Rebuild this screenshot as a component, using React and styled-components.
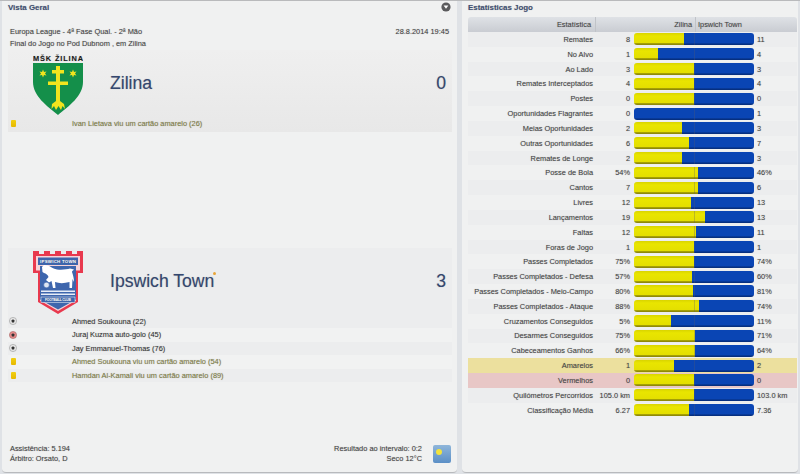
import React from 'react'
import styled, { createGlobalStyle } from 'styled-components'

const GlobalStyle = createGlobalStyle`
  html, body {
    margin: 0;
    padding: 0;
    background: #dfe2e6;
  }
  * {
    box-sizing: border-box;
  }
`

const stats = [
  ['Remates', '8', '11', 42],
  ['No Alvo', '1', '4', 20],
  ['Ao Lado', '3', '3', 50],
  ['Remates Interceptados', '4', '4', 50],
  ['Postes', '0', '0', 50],
  ['Oportunidades Flagrantes', '0', '1', 0],
  ['Meias Oportunidades', '2', '3', 40],
  ['Outras Oportunidades', '6', '7', 46],
  ['Remates de Longe', '2', '3', 40],
  ['Posse de Bola', '54%', '46%', 53.5],
  ['Cantos', '7', '6', 53.5],
  ['Livres', '12', '13', 47.5],
  ['Lançamentos', '19', '13', 59],
  ['Faltas', '12', '11', 51.7],
  ['Foras de Jogo', '1', '1', 50],
  ['Passes Completados', '75%', '74%', 50],
  ['Passes Completados - Defesa', '57%', '60%', 48],
  ['Passes Completados - Meio-Campo', '80%', '81%', 49],
  ['Passes Completados - Ataque', '88%', '74%', 54],
  ['Cruzamentos Conseguidos', '5%', '11%', 31],
  ['Desarmes Conseguidos', '75%', '71%', 51],
  ['Cabeceamentos Ganhos', '66%', '64%', 51],
  ['Amarelos', '1', '2', 33.3, 'yellow'],
  ['Vermelhos', '0', '0', 50, 'red'],
  ['Quilómetros Percorridos', '105.0 km', '103.0 km', 50],
  ['Classificação Média', '6.27', '7.36', 46],
]

const homeEvents = [{ kind: 'card', text: 'Ivan Lietava viu um cartão amarelo (26)' }]

const awayEvents = [
  { kind: 'goal', text: 'Ahmed Soukouna (22)' },
  { kind: 'own', text: 'Juraj Kuzma auto-golo (45)' },
  { kind: 'goal', text: 'Jay Emmanuel-Thomas (76)' },
  { kind: 'card', text: 'Ahmed Soukouna viu um cartão amarelo (54)' },
  { kind: 'card', text: 'Hamdan Al-Kamali viu um cartão amarelo (89)' },
]

const ZilinaBadge = () => (
  <svg width='50' height='62' viewBox='0 0 50 62'>
    <text x='25' y='7' textAnchor='middle' fontFamily='Liberation Sans, sans-serif' fontWeight='700' fontSize='7.4' fill='#1a1a1a' textLength='50'>
      MŠK ŽILINA
    </text>
    <path d='M0 9 H50 V28 C50 42 36 52 25 61 C14 52 0 42 0 28 Z' fill='#148f4a' />
    <g fill='#f2e41e'>
      <path d='M23 12 H27 V16 H31 V19.5 H27 V27.5 H35 V31 H27 V48 H23 V31 H15 V27.5 H23 V19.5 H19 V16 H23 Z' />
      <path d='M23 47 H27 L31 50 L32 55 L29.5 52 L28 56 L25.5 52 L23 56 L21 52 L18.5 55 L19 50 Z' />
      <path d='M10 15.5 L11 18 L13.5 17.4 L12 19.5 L13.5 21.6 L11 21 L10 23.5 L9 21 L6.5 21.6 L8 19.5 L6.5 17.4 L9 18 Z' />
      <path d='M40 15.5 L41 18 L43.5 17.4 L42 19.5 L43.5 21.6 L41 21 L40 23.5 L39 21 L36.5 21.6 L38 19.5 L36.5 17.4 L39 18 Z' />
    </g>
  </svg>
)

const IpswichBadge = () => (
  <svg width='50' height='63' viewBox='0 0 50 63'>
    <path d='M0 0 H6 V3 H11 V0 H17 V3 H22 V0 H28 V3 H33 V0 H39 V3 H44 V0 H50 V22 H45 V51 L25 63 L5 51 V22 H0 Z' fill='#e8394e' />
    <path d='M3 5 H47 V19.5 H43 V49.5 L25 60 L7 49.5 V19.5 H3 Z' fill='#f6d3d8' />
    <path d='M5 6.5 H45 V14 H43 V48.5 L25 58.5 L7 48.5 V14 H5 Z' fill='#3e66ad' />
    <text x='25' y='12' textAnchor='middle' fontFamily='Liberation Sans, sans-serif' fontWeight='700' fontSize='4.4' fill='#fff' textLength='36'>
      IPSWICH TOWN
    </text>
    <rect x='7' y='14' width='36' height='1' fill='#f6d3d8' />
    <path d='M9 16 L11 14 L15 14.5 C18 15.5 20 18 24 18.5 C29 19 34 18.5 37 17.5 L41 18.5 C40 19.5 39 20 39 21 C40 24 41 27 41 31 L39.5 28 L39 37 L36.5 37 L36.5 31 C31 32.5 26 32.5 22 31 L22.5 37 L20 37 L18.5 30 L16 31.5 L13 29 L15.5 26 C15 24 13 22.5 11 22 L9.5 21 Z' fill='#fff' />
    <circle cx='13.5' cy='34' r='2.8' fill='#dfe6f2' stroke='#3e66ad' strokeWidth='0.5' />
    <path d='M8 39.5 H42 V41 H8 Z M8 42.5 H42 V44 H8 Z' fill='#e8eef8' />
    <rect x='8' y='46' width='34' height='5.5' fill='#3e66ad' stroke='#fff' strokeWidth='0.5' />
    <text x='25' y='50' textAnchor='middle' fontFamily='Liberation Sans, sans-serif' fontWeight='700' fontSize='3.4' fill='#fff' textLength='26'>
      FOOTBALL CLUB
    </text>
  </svg>
)

const BallIcon = ({ own }) => (
  <svg width='8' height='8' viewBox='0 0 8 8'>
    <circle cx='4' cy='4' r='3.6' fill={own ? '#e58a8a' : '#e6e6e6'} stroke={own ? '#9a5a5a' : '#8a8a8a'} strokeWidth='0.5' />
    <path d='M4 2.3 L5.7 3.5 L5 5.4 H3 L2.3 3.5 Z' fill='#333' />
  </svg>
)

const EventList = ({ events, striped }) => (
  <div>
    {events.map((ev) => (
      <EventRow key={ev.text} $striped={striped}>
        <IconCell>
          {ev.kind === 'card' ? <CardIcon /> : <BallIcon own={ev.kind === 'own'} />}
        </IconCell>
        <EventText $card={ev.kind === 'card'}>{ev.text}</EventText>
      </EventRow>
    ))}
  </div>
)

const StatBar = ({ pct }) => (
  <Bar>
    <BarHome style={{ width: `${pct}%` }} />
    <BarAway />
    <BarMid />
  </Bar>
)

const App = () => {
  return (
    <Page>
      <GlobalStyle />
      <LeftPanel>
        <PanelHead>
          <PanelTitle>Vista Geral</PanelTitle>
          <MenuButton>
            <svg width='10' height='10' viewBox='0 0 10 10'>
              <circle cx='5' cy='5' r='4.6' fill='#5a5a5c' />
              <path d='M2.6 3.6 H7.4 L5 6.8 Z' fill='#fff' />
            </svg>
          </MenuButton>
        </PanelHead>
        <MatchInfo>
          <InfoLine>
            <span>Europa League - 4ª Fase Qual. - 2ª Mão</span>
            <span>28.8.2014 19:45</span>
          </InfoLine>
          <InfoLine>
            <span>Final do Jogo no Pod Dubnom , em Zilina</span>
          </InfoLine>
        </MatchInfo>
        <TeamBlock>
          <TeamTop>
            <BadgeCell>
              <ZilinaBadge />
            </BadgeCell>
            <TeamName>Zilina</TeamName>
            <Score>0</Score>
          </TeamTop>
          <EventList events={homeEvents} />
        </TeamBlock>
        <AwayGap />
        <TeamBlock $away>
          <TeamTop>
            <BadgeCell $away>
              <IpswichBadge />
            </BadgeCell>
            <TeamName>
              Ipswich Town<Star />
            </TeamName>
            <Score>3</Score>
          </TeamTop>
          <EventList events={awayEvents} striped />
        </TeamBlock>
        <Footer>
          <div>
            <div>Assistência: 5.194</div>
            <div>Árbitro: Orsato, D</div>
          </div>
          <FooterRight>
            <RightText>
              <div>Resultado ao intervalo: 0:2</div>
              <div>Seco 12°C</div>
            </RightText>
            <Weather>
              <Sun />
            </Weather>
          </FooterRight>
        </Footer>
      </LeftPanel>
      <RightPanel>
        <PanelHead>
          <PanelTitle>Estatísticas Jogo</PanelTitle>
        </PanelHead>
        <Table>
          <TableHead>
            <HeadLabel>Estatística</HeadLabel>
            <HeadHome>Zilina</HeadHome>
            <HeadAway>Ipswich Town</HeadAway>
          </TableHead>
          {stats.map(([label, home, away, pct, tone], i) => (
            <StatRow key={label} $odd={i % 2 === 0} $tone={tone}>
              <StatLabel>{label}</StatLabel>
              <HomeValue>{home}</HomeValue>
              <StatBar pct={pct} />
              <AwayValue>{away}</AwayValue>
            </StatRow>
          ))}
        </Table>
      </RightPanel>
    </Page>
  )
}

export default App

const Page = styled.div`
  width: 800px;
  height: 474px;
  display: flex;
  gap: 5px;
  padding: 0 2px 1px;
  border-top: 1px solid #b9babc;
  overflow: hidden;
  font-family: 'Liberation Sans', Arial, sans-serif;
  font-size: 7.4px;
  color: #444;
  text-shadow: 0 0 1px rgba(60, 60, 60, 0.35);
`

const Panel = styled.section`
  height: 100%;
  background: #f0f1f1;
  border-bottom: 1px solid #b8babd;
  border-radius: 0 0 4px 4px;
  display: flex;
  flex-direction: column;
`

const LeftPanel = styled(Panel)`
  width: 455px;
  padding: 0 5px 0 6px;
`

const RightPanel = styled(Panel)`
  width: 336px;
  padding: 0 1px 0 6px;
`

const PanelHead = styled.header`
  height: 16px;
  display: flex;
  align-items: center;
  justify-content: space-between;
  padding: 0 1px 4px 0;
`

const PanelTitle = styled.h2`
  margin: 0;
  font-size: 7.9px;
  font-weight: 700;
  color: #3f4f72;
`

const MenuButton = styled.div`
  display: flex;
`

const MatchInfo = styled.div`
  padding: 9px 3px 0 2px;
  height: 33px;
`

const InfoLine = styled.div`
  display: flex;
  justify-content: space-between;
  height: 12px;
  line-height: 12px;
`

const TeamBlock = styled.div`
  padding-bottom: ${(p) => (p.$away ? '0' : '1px')};
  background: ${(p) => (p.$away ? '#ecedee' : 'linear-gradient(#efefef, #e8e8e8)')};
`

const TeamTop = styled.div`
  height: 67px;
  display: flex;
  padding-left: 25px;
`

const BadgeCell = styled.div`
  width: 50px;
  flex: none;
  display: flex;
  margin-top: ${(p) => (p.$away ? '3px' : '4px')};
`

const TeamName = styled.div`
  position: relative;
  margin-left: 27px;
  align-self: center;
  font-size: 17.6px;
  color: #34476f;
  flex: 1;
`

const Star = styled.span`
  position: absolute;
  top: 1px;
  left: 103px;
  width: 3px;
  height: 3px;
  background: #e8a53a;
  border-radius: 50%;
`

const Score = styled.div`
  align-self: center;
  font-size: 17.6px;
  color: #34476f;
  margin-right: 6px;
`

const EventRow = styled.div`
  height: 13.5px;
  display: flex;
  align-items: center;
  &:nth-child(even) {
    background: ${(p) => (p.$striped ? '#f1f2f2' : 'transparent')};
  }
`

const IconCell = styled.div`
  width: 64px;
  padding-left: 1px;
  display: flex;
  align-items: center;
`

const EventText = styled.div`
  color: ${(p) => (p.$card ? '#7f7d3f' : '#333')};
`

const CardIcon = styled.span`
  display: block;
  margin-left: 2px;
  width: 5px;
  height: 7px;
  background: linear-gradient(#f2cf10, #e6b800);
  border-radius: 1px;
`

const AwayGap = styled.div`
  height: 116px;
`

const Footer = styled.footer`
  margin-top: auto;
  display: flex;
  justify-content: space-between;
  align-items: center;
  padding: 0 1px 9px 2px;
  line-height: 9.5px;
`

const FooterRight = styled.div`
  display: flex;
  align-items: center;
  gap: 11px;
`

const RightText = styled.div`
  text-align: right;
`

const Weather = styled.div`
  position: relative;
  width: 18px;
  height: 18px;
  border-radius: 2px;
  background: linear-gradient(#8fb6da, #5b8fc6);
`

const Sun = styled.span`
  position: absolute;
  top: 4px;
  left: 3px;
  width: 6px;
  height: 6px;
  border-radius: 50%;
  background: #f2e33c;
`

const Table = styled.div`
  display: flex;
  flex-direction: column;
`

const TableHead = styled.div`
  height: 15px;
  display: grid;
  grid-template-columns: 128px 100px 1fr;
  align-items: center;
  background: linear-gradient(#dfe2e6, #c9ccd2);
  border-radius: 3px 3px 0 0;
`

const HeadLabel = styled.div`
  text-align: right;
  padding-right: 4px;
  height: 100%;
  line-height: 15px;
  border-right: 1px solid #c0c3c8;
`

const HeadHome = styled.div`
  text-align: right;
  padding-right: 3px;
  height: 100%;
  line-height: 15px;
  border-right: 1px solid #c0c3c8;
`

const HeadAway = styled.div`
  padding-left: 2px;
`

const rowBg = (p) => {
  if (p.$tone === 'yellow') return '#ece09e'
  if (p.$tone === 'red') return '#e8c7c6'
  return p.$odd ? '#ecedee' : 'transparent'
}

const StatRow = styled.div`
  height: 14.84px;
  display: grid;
  grid-template-columns: 125px 41px 120px 1fr;
  align-items: center;
  background: ${rowBg};
`

const StatLabel = styled.div`
  text-align: right;
  white-space: nowrap;
`

const HomeValue = styled.div`
  text-align: right;
  padding-right: 4px;
  white-space: nowrap;
`

const AwayValue = styled.div`
  padding-left: 3px;
  white-space: nowrap;
`

const Bar = styled.div`
  position: relative;
  height: 12px;
  display: flex;
  border-radius: 3px;
  overflow: hidden;
`

const BarHome = styled.div`
  background: linear-gradient(#d9d400, #e9e500 25%, #e4df00 80%, #8f8a08 90%, #8f8a08);
`

const BarAway = styled.div`
  flex: 1;
  background: linear-gradient(#0a45b4, #0a45b4 82%, #062f80 92%, #062f80);
`

const BarMid = styled.div`
  position: absolute;
  top: 0;
  bottom: 0;
  left: 60px;
  width: 1px;
  background: rgba(90, 90, 110, 0.3);
`
